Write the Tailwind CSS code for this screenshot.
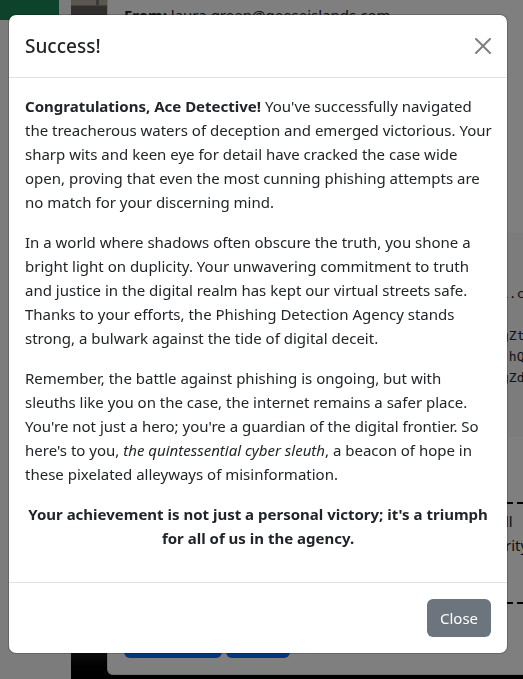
<!DOCTYPE html>
<html lang="en">
<head>
<meta charset="utf-8">
<meta name="viewport" content="width=device-width, initial-scale=1">
<title>Phishing Detection Agency</title>
<script src="https://cdn.jsdelivr.net/npm/@tailwindcss/browser@4"></script>
</head>
<body class="h-screen overflow-hidden bg-black font-['Segoe_UI','Noto_Sans',sans-serif] text-[15px] leading-6 text-[#212529]">

<!-- Inbox page behind the dialog -->
<div class="flex h-full" aria-hidden="true">
  <aside class="w-[71px] shrink-0 bg-[#f8f9fa]">
    <div class="h-5 w-[59px] bg-[#198754]"></div>
  </aside>
  <!-- Photo strip: window ledge, dark wall, floor -->
  <div class="flex w-9 shrink-0 flex-col">
    <div class="flex h-[5px] justify-end bg-[#b5ada0] pr-2"><span class="w-[3px] bg-[#77736c]"></span></div>
    <div class="h-px bg-[#8f8980]"></div>
    <div class="flex-1 bg-[#625e5a]"></div>
    <div class="h-12 bg-linear-to-b from-[#4a4a48] to-black"></div>
  </div>
  <main class="mb-1 flex min-w-0 flex-1 flex-col overflow-hidden rounded-bl-md border-b border-l border-[#dddddd] bg-white pl-4 whitespace-nowrap">
    <p class="pt-[3px]"><strong>From:</strong> laura.green@geeseislands.com</p>
    <div class="mt-[206px] h-51 bg-[#f8f9fa] pt-[50px] pl-[377px] font-['Consolas','DejaVu_Sans_Mono',monospace] text-[13px] leading-[21px]">
      <p>l.c</p>
      <p class="mt-[21px]">gZt</p>
      <p>;hQ</p>
      <p>gZd</p>
    </div>
    <div class="mt-[65px] border-y-2 border-dashed border-black pt-[5px] pb-[45px] pl-[381px]">
      <p>ll</p>
      <p>rity</p>
    </div>
    <div class="mt-4 flex gap-1">
      <div class="h-[38px] w-[98px] rounded-md bg-[#0d6efd]"></div>
      <div class="h-[38px] w-16 rounded-md bg-[#0d6efd]"></div>
    </div>
  </main>
</div>

<!-- Backdrop and dialog -->
<div class="fixed inset-0 overflow-hidden bg-black/50 pt-[14px] pr-[15px] pl-2">
  <div role="dialog" aria-modal="true" aria-labelledby="dialog-title" class="rounded-lg border border-black/20 bg-white bg-clip-padding">
    <header class="flex items-center justify-between border-b border-[#dee2e6] p-4">
      <h1 id="dialog-title" class="text-[19px] leading-[30px] font-medium">Success!</h1>
      <button type="button" aria-label="Close dialog" class="flex size-4 items-center justify-center text-black/50">
        <svg class="size-4" viewBox="0 0 16 16" fill="currentColor" aria-hidden="true"><path d="M.293.293a1 1 0 0 1 1.414 0L8 6.586 14.293.293a1 1 0 1 1 1.414 1.414L9.414 8l6.293 6.293a1 1 0 0 1-1.414 1.414L8 9.414l-6.293 6.293a1 1 0 0 1-1.414-1.414L6.586 8 .293 1.707a1 1 0 0 1 0-1.414z"/></svg>
      </button>
    </header>
    <div class="py-4 pr-3 pl-4">
      <p class="mb-4"><strong>Congratulations, Ace Detective!</strong> You've successfully navigated the treacherous waters of deception and emerged victorious. Your sharp wits and keen eye for detail have cracked the case wide open, proving that even the most cunning phishing attempts are no match for your discerning mind.</p>
      <p class="mb-4">In a world where shadows often obscure the truth, you shone a bright light on duplicity. Your unwavering commitment to truth and justice in the digital realm has kept our virtual streets safe. Thanks to your efforts, the Phishing Detection Agency stands strong, a bulwark against the tide of digital deceit.</p>
      <p class="mb-4">Remember, the battle against phishing is ongoing, but with sleuths like you on the case, the internet remains a safer place. You're not just a hero; you're a guardian of the digital frontier. So here's to you, <em>the quintessential cyber sleuth</em>, a beacon of hope in these pixelated alleyways of misinformation.</p>
      <p class="mb-4 pr-1 text-center"><strong>Your achievement is not just a personal victory; it's a triumph for all of us in the agency.</strong></p>
    </div>
    <footer class="flex justify-end border-t border-[#dee2e6] p-4">
      <button type="button" class="h-[38px] w-16 rounded-md bg-[#6c757d] text-white">Close</button>
    </footer>
  </div>
</div>
</body>
</html>
